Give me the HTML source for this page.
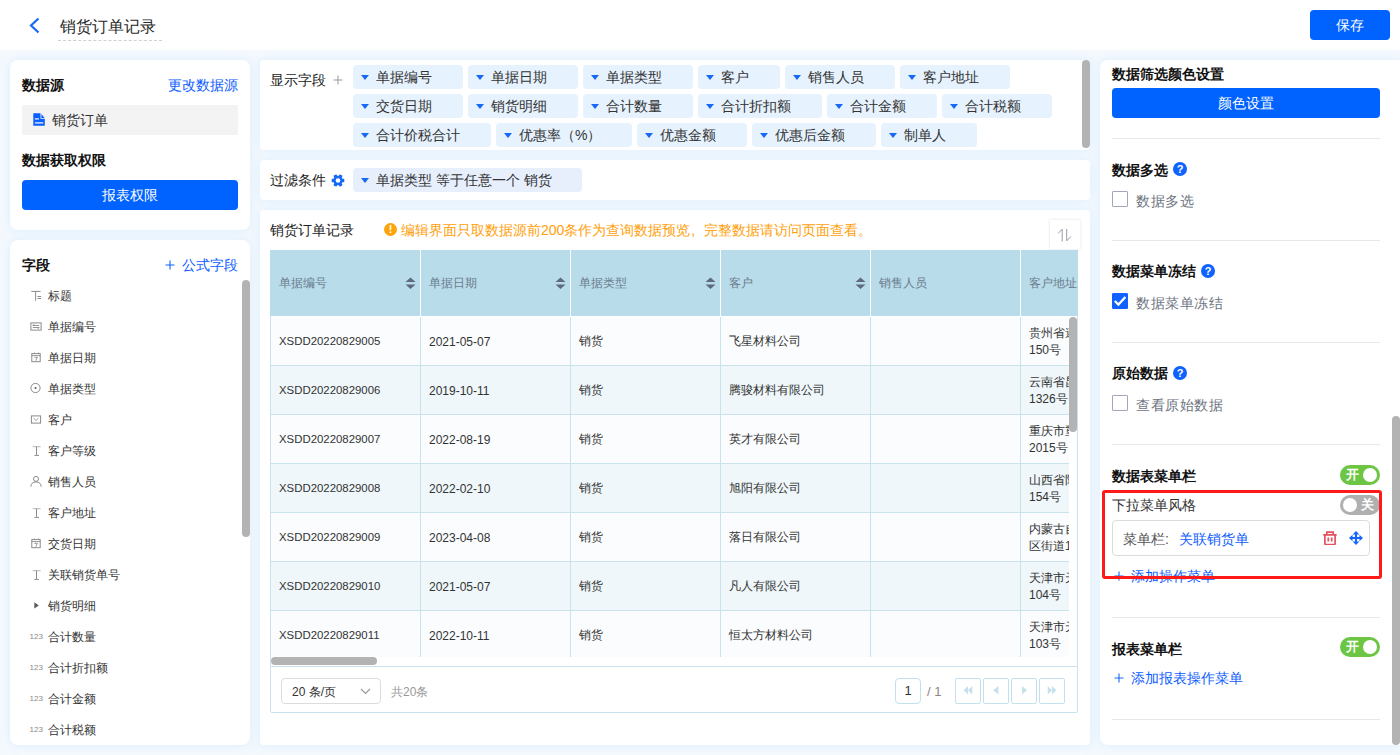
<!DOCTYPE html>
<html><head><meta charset="utf-8">
<style>
*{box-sizing:border-box;margin:0;padding:0}
html,body{width:1400px;height:755px;overflow:hidden}
body{position:relative;background:#f4f9fe;font-family:"Liberation Sans",sans-serif;color:#333;font-size:14px;line-height:1}
.abs{position:absolute}
.card{position:absolute;background:#fff;border-radius:8px;box-shadow:0 0 8px rgba(195,228,253,.5)}
.hdr{position:absolute;left:0;top:0;width:1400px;height:50px;background:#fff}
.btn{position:absolute;background:#0062ff;color:#fff;border-radius:4px;text-align:center;font-size:14px;line-height:30px}
.ttl{position:absolute;font-weight:bold;color:#111;font-size:14px;line-height:14px}
.link{color:#0d5cff}
.t{position:absolute;white-space:nowrap;line-height:14px}
/* fields list */
.fld{position:absolute;left:12px;font-size:12px;line-height:12px;color:#333;white-space:nowrap}
.fld .ic{position:absolute;left:8px;top:0;width:12px;height:12px}
.fld span{position:absolute;left:26px;top:0}
/* chips */
.chips{position:absolute;left:93px;top:5px;width:730px}
.chip{display:inline-block;position:relative;height:24px;margin:0 5px 5px 0;padding:0 31px 0 23px;background:#e6f2fe;border-radius:4px;font-size:14px;line-height:24px;color:#333;vertical-align:top;white-space:nowrap}
.chip:before{content:"";position:absolute;left:8px;top:10px;border-left:4px solid transparent;border-right:4px solid transparent;border-top:5px solid #1769f5}
/* table */
.tbl{position:absolute;left:10px;top:40px;width:808px;height:407px;overflow:hidden}
.th{position:absolute;top:0;height:66px;background:#b8dcea;font-size:12px;color:#6a7a8b;line-height:66px;padding-left:9px;border-right:1px solid #fff}
.row{position:absolute;left:0;width:800px;height:49px;border-bottom:1px solid #c8e3ee}
.cell{position:absolute;top:0;height:49px;font-size:12px;color:#333;line-height:49px;padding-left:9px;border-right:1px solid #c8e3ee;white-space:nowrap;overflow:hidden}
.sep{position:absolute;height:1px;background:#e8e8e8}
.cb{position:absolute;width:16px;height:16px;border:1px solid #a0a7b8;border-radius:1px;background:#fff}
.q{position:absolute;width:14px;height:14px;border-radius:50%;background:#0f62fe;color:#fff;font-size:11px;font-weight:bold;text-align:center;line-height:14px}
.lbl{position:absolute;font-size:14px;letter-spacing:0.5px;color:#6e7481;line-height:14px;white-space:nowrap}
.tog{position:absolute;width:40px;height:20px;border-radius:10px}
.tog .k{position:absolute;top:3px;width:14px;height:14px;border-radius:50%;background:#fff}
.tog .tx{position:absolute;top:3px;font-size:13px;line-height:14px;color:#fff;font-weight:bold}
.pbtn{position:absolute;top:12px;width:26px;height:26px;border:1px solid #c4e0ec;border-radius:3px;background:#fff}
</style></head><body>

<!-- header -->
<div class="hdr">
  <svg class="abs" style="left:28px;top:17px" width="13" height="17" viewBox="0 0 13 17"><path d="M10.5 1.5 L3 8.5 L10.5 15.5" fill="none" stroke="#1769f5" stroke-width="2.2"/></svg>
  <div class="t" style="left:60px;top:18px;font-size:16px;line-height:18px;color:#2a2a2a">销货订单记录</div>
  <div class="abs" style="left:58px;top:40px;width:104px;height:1px;border-top:1px dashed #d0d0d0"></div>
  <div class="btn" style="left:1310px;top:10px;width:80px;height:30px">保存</div>
</div>

<!-- left card 1 -->
<div class="card" style="left:10px;top:60px;width:240px;height:170px">
  <div class="ttl" style="left:12px;top:18px">数据源</div>
  <div class="t link" style="left:158px;top:18px;font-size:14px">更改数据源</div>
  <div class="abs" style="left:12px;top:45px;width:216px;height:30px;background:#f3f3f3;border-radius:2px"></div>
  <svg class="abs" style="left:23px;top:53px" width="12" height="13" viewBox="0 0 12 13"><path d="M0.3 0.2H7.5V5.8H11.8V12.8H0.3Z" fill="#0a5fff"/><path d="M8.4 0.9L11.6 4.9H8.4Z" fill="#0a5fff"/><rect x="1.9" y="5.3" width="4" height="1.2" fill="#fff"/><rect x="1.9" y="9.3" width="8.4" height="1.2" fill="#fff"/></svg>
  <div class="t" style="left:42px;top:53px;font-size:14px;color:#333">销货订单</div>
  <div class="ttl" style="left:12px;top:93px">数据获取权限</div>
  <div class="btn" style="left:12px;top:120px;width:216px;height:30px">报表权限</div>
</div>

<!-- left card 2 -->
<div class="card" style="left:10px;top:240px;width:240px;height:505px;overflow:hidden">
  <div class="ttl" style="left:12px;top:18px">字段</div>
  <svg style="position:absolute;left:155px;top:20px" width="10" height="10" viewBox="0 0 10 10"><path d="M5 0.5V9.5M0.5 5H9.5" stroke="#1060ff" stroke-width="1.1"/></svg><div class="t link" style="left:172px;top:18px;font-size:14px">公式字段</div>
  <div class="abs" style="left:232px;top:40px;width:8px;height:257px;background:#b3b3b3;border-radius:4px"></div>
  <div class="fld" style="top:50px"><svg class="ic" viewBox="0 0 12 12" width="12" height="12"><path d="M1.3 1.4H10.6M5.6 1.4V10.8M7.5 6.5H11.1M7.5 8.5H11.1" stroke="#8a8a8a" stroke-width="1" fill="none"/></svg><span>标题</span></div>
<div class="fld" style="top:81px"><svg class="ic" viewBox="0 0 12 12" width="12" height="12"><rect x="0.9" y="1.9" width="10.2" height="7.2" stroke="#8a8a8a" fill="none"/><path d="M4.3 3L2.8 4.5H9.2M2.8 6.5H9.2L7.7 8" stroke="#8a8a8a" fill="none" stroke-width="0.9"/></svg><span>单据编号</span></div>
<div class="fld" style="top:112px"><svg class="ic" viewBox="0 0 12 12" width="12" height="12"><rect x="1.8" y="1.6" width="8.4" height="8.1" stroke="#8a8a8a" fill="none"/><path d="M1.8 3.6H10.2M4.5 0.5V2M8.5 0.5V2M4.4 5.3H7.4L5.7 8.8" stroke="#8a8a8a" fill="none" stroke-width="0.9"/></svg><span>单据日期</span></div>
<div class="fld" style="top:143px"><svg class="ic" viewBox="0 0 12 12" width="12" height="12"><circle cx="5.5" cy="5" r="4.6" stroke="#8a8a8a" fill="none"/><circle cx="5.5" cy="5" r="1" fill="#555"/></svg><span>单据类型</span></div>
<div class="fld" style="top:174px"><svg class="ic" viewBox="0 0 12 12" width="12" height="12"><rect x="1.4" y="1.9" width="9.2" height="7.2" stroke="#8a8a8a" fill="none"/><path d="M3.5 4.2L5.9 6.5L8.3 4.2" stroke="#8a8a8a" fill="none" stroke-width="0.9"/></svg><span>客户</span></div>
<div class="fld" style="top:205px"><svg class="ic" viewBox="0 0 12 12" width="12" height="12"><path d="M2.8 1.7H10.6" stroke="#b5b5b5"/><path d="M6.5 1.7V9.8M4.4 10.4H9" stroke="#8a8a8a" fill="none"/></svg><span>客户等级</span></div>
<div class="fld" style="top:236px"><svg class="ic" viewBox="0 0 12 12" width="12" height="12"><circle cx="6" cy="2.9" r="2.5" stroke="#8a8a8a" fill="none"/><path d="M0.8 10.7Q1.2 5.9 6 5.9Q10.8 5.9 11.2 10.7" stroke="#8a8a8a" fill="none"/></svg><span>销售人员</span></div>
<div class="fld" style="top:267px"><svg class="ic" viewBox="0 0 12 12" width="12" height="12"><path d="M2.8 1.7H10.6" stroke="#b5b5b5"/><path d="M6.5 1.7V9.8M4.4 10.4H9" stroke="#8a8a8a" fill="none"/></svg><span>客户地址</span></div>
<div class="fld" style="top:298px"><svg class="ic" viewBox="0 0 12 12" width="12" height="12"><rect x="1.8" y="1.6" width="8.4" height="8.1" stroke="#8a8a8a" fill="none"/><path d="M1.8 3.6H10.2M4.5 0.5V2M8.5 0.5V2M4.4 5.3H7.4L5.7 8.8" stroke="#8a8a8a" fill="none" stroke-width="0.9"/></svg><span>交货日期</span></div>
<div class="fld" style="top:329px"><svg class="ic" viewBox="0 0 12 12" width="12" height="12"><path d="M2.8 1.7H10.6" stroke="#b5b5b5"/><path d="M6.5 1.7V9.8M4.4 10.4H9" stroke="#8a8a8a" fill="none"/></svg><span>关联销货单号</span></div>
<div class="fld" style="top:360px"><svg class="ic" viewBox="0 0 12 12" width="12" height="12"><path d="M4.3 2.2L8.8 5.4L4.3 8.6Z" fill="#5a5a5a"/></svg><span>销货明细</span></div>
<div class="fld" style="top:391px"><span class="ic" style="left:7.5px;top:-0.5px;font-size:8px;color:#8a8a8a;width:auto;letter-spacing:0.1px">123</span><span>合计数量</span></div>
<div class="fld" style="top:422px"><span class="ic" style="left:7.5px;top:-0.5px;font-size:8px;color:#8a8a8a;width:auto;letter-spacing:0.1px">123</span><span>合计折扣额</span></div>
<div class="fld" style="top:453px"><span class="ic" style="left:7.5px;top:-0.5px;font-size:8px;color:#8a8a8a;width:auto;letter-spacing:0.1px">123</span><span>合计金额</span></div>
<div class="fld" style="top:484px"><span class="ic" style="left:7.5px;top:-0.5px;font-size:8px;color:#8a8a8a;width:auto;letter-spacing:0.1px">123</span><span>合计税额</span></div>
</div>

<!-- middle: display fields -->
<div class="card" style="left:260px;top:60px;width:830px;height:90px;border-radius:4px">
  <div class="t" style="left:10px;top:13px;font-size:14px;color:#222">显示字段</div><svg style="position:absolute;left:72.5px;top:15px" width="10" height="10" viewBox="0 0 10 10"><path d="M5 0.5V9.5M0.5 5H9.5" stroke="#999" stroke-width="1"/></svg>
  <div class="chips">
    <span class="chip">单据编号</span><span class="chip">单据日期</span><span class="chip">单据类型</span><span class="chip">客户</span><span class="chip">销售人员</span><span class="chip">客户地址</span><br><span class="chip">交货日期</span><span class="chip">销货明细</span><span class="chip">合计数量</span><span class="chip">合计折扣额</span><span class="chip">合计金额</span><span class="chip">合计税额</span><br><span class="chip">合计价税合计</span><span class="chip">优惠率（%）</span><span class="chip">优惠金额</span><span class="chip">优惠后金额</span><span class="chip">制单人</span>
  </div>
  <div class="abs" style="left:822px;top:0;width:8px;height:88px;background:#b3b3b3;border-radius:4px"></div>
</div>

<!-- filter -->
<div class="card" style="left:260px;top:160px;width:830px;height:40px;border-radius:4px">
  <div class="t" style="left:10px;top:13px;font-size:14px;color:#222">过滤条件</div>
  <svg class="abs" style="left:70.5px;top:13.5px" width="14" height="13" viewBox="-7 -6.5 14 13"><g fill="#1769f5"><circle r="4.7"/><rect x="-1.7" y="-6.3" width="3.4" height="12.6" transform="rotate(90)" rx="0.6"/><rect x="-1.7" y="-6.3" width="3.4" height="12.6" transform="rotate(30)" rx="0.6"/><rect x="-1.7" y="-6.3" width="3.4" height="12.6" transform="rotate(-30)" rx="0.6"/></g><circle r="2.3" fill="#fff"/></svg>
  <span class="chip" style="position:absolute;left:93px;top:8px;padding-right:30px;background:#e7effd">单据类型 等于任意一个 销货</span>
</div>

<!-- table card -->
<div class="card" style="left:260px;top:210px;width:830px;height:535px;border-radius:4px">
  <div class="t" style="left:10px;top:13px;font-size:14px;color:#222">销货订单记录</div>
  <div class="abs" style="left:124px;top:13px;width:13px;height:13px;border-radius:50%;background:#fca40a;color:#fff;font-size:11px;font-weight:bold;text-align:center;line-height:13px">!</div>
  <div class="t" style="left:141px;top:13px;font-size:14px;color:#ffa00a">编辑界面只取数据源前200条作为查询数据预览<span style="display:inline-block;width:14px;text-indent:1px">,</span>完整数据请访问页面查看。</div>
  <div class="abs" style="left:790px;top:10px;width:30px;height:29px;background:#fff;box-shadow:0 0 3px rgba(0,0,0,.12);color:#aaa;font-size:14px;text-align:center;line-height:29px"><svg class="abs" style="left:0;top:0" width="30" height="29" viewBox="0 0 30 29"><path d="M12.2 21.5V9.2L8.2 13.3M16.7 9V20.8L20.9 16.4" stroke="#9a9aa8" stroke-width="1" fill="none"/></svg></div>
<!--TBL-->
<div class="abs" style="left:10px;top:40px;width:808px;height:407px;overflow:hidden">
<div class="abs" style="left:0;top:0;width:808px;height:66px;background:#b8dcea"></div>
<div class="abs" style="left:9px;top:27px;font-size:12px;line-height:12px;color:#6b7b8c;white-space:nowrap">单据编号</div>
<svg class="abs" style="left:135px;top:27px" width="11" height="13" viewBox="0 0 11 13"><path d="M0.5 5L5.5 0.5L10.5 5Z M0.5 7.5L5.5 12L10.5 7.5Z" fill="#5d6a80"/></svg>
<div class="abs" style="left:159px;top:27px;font-size:12px;line-height:12px;color:#6b7b8c;white-space:nowrap">单据日期</div>
<svg class="abs" style="left:285px;top:27px" width="11" height="13" viewBox="0 0 11 13"><path d="M0.5 5L5.5 0.5L10.5 5Z M0.5 7.5L5.5 12L10.5 7.5Z" fill="#5d6a80"/></svg>
<div class="abs" style="left:150px;top:0;width:1px;height:66px;background:#fff"></div>
<div class="abs" style="left:309px;top:27px;font-size:12px;line-height:12px;color:#6b7b8c;white-space:nowrap">单据类型</div>
<svg class="abs" style="left:435px;top:27px" width="11" height="13" viewBox="0 0 11 13"><path d="M0.5 5L5.5 0.5L10.5 5Z M0.5 7.5L5.5 12L10.5 7.5Z" fill="#5d6a80"/></svg>
<div class="abs" style="left:300px;top:0;width:1px;height:66px;background:#fff"></div>
<div class="abs" style="left:459px;top:27px;font-size:12px;line-height:12px;color:#6b7b8c;white-space:nowrap">客户</div>
<svg class="abs" style="left:585px;top:27px" width="11" height="13" viewBox="0 0 11 13"><path d="M0.5 5L5.5 0.5L10.5 5Z M0.5 7.5L5.5 12L10.5 7.5Z" fill="#5d6a80"/></svg>
<div class="abs" style="left:450px;top:0;width:1px;height:66px;background:#fff"></div>
<div class="abs" style="left:609px;top:27px;font-size:12px;line-height:12px;color:#6b7b8c;white-space:nowrap">销售人员</div>
<div class="abs" style="left:600px;top:0;width:1px;height:66px;background:#fff"></div>
<div class="abs" style="left:759px;top:27px;font-size:12px;line-height:12px;color:#6b7b8c;white-space:nowrap">客户地址</div>
<div class="abs" style="left:750px;top:0;width:1px;height:66px;background:#fff"></div>
<div class="abs" style="left:1px;top:67px;width:798px;height:49px;background:#fafcfe;border-bottom:1px solid #c8e3ee"></div>
<div class="abs" style="left:9px;top:85px;font-size:11.4px;line-height:13px;color:#333;white-space:nowrap">XSDD20220829005</div>
<div class="abs" style="left:159px;top:86px;font-size:12px;line-height:13px;color:#333;white-space:nowrap">2021-05-07</div>
<div class="abs" style="left:309px;top:85px;font-size:12px;line-height:13px;color:#333;white-space:nowrap">销货</div>
<div class="abs" style="left:459px;top:85px;font-size:12px;line-height:13px;color:#333;white-space:nowrap">飞星材料公司</div>
<div class="abs" style="left:759px;top:74.5px;width:40px;overflow:hidden;font-size:12px;line-height:17px;color:#333;white-space:nowrap">贵州省遵义市<br>150号</div>
<div class="abs" style="left:1px;top:116px;width:798px;height:49px;background:#eff7fa;border-bottom:1px solid #c8e3ee"></div>
<div class="abs" style="left:9px;top:134px;font-size:11.4px;line-height:13px;color:#333;white-space:nowrap">XSDD20220829006</div>
<div class="abs" style="left:159px;top:135px;font-size:12px;line-height:13px;color:#333;white-space:nowrap">2019-10-11</div>
<div class="abs" style="left:309px;top:134px;font-size:12px;line-height:13px;color:#333;white-space:nowrap">销货</div>
<div class="abs" style="left:459px;top:134px;font-size:12px;line-height:13px;color:#333;white-space:nowrap">腾骏材料有限公司</div>
<div class="abs" style="left:759px;top:123.5px;width:40px;overflow:hidden;font-size:12px;line-height:17px;color:#333;white-space:nowrap">云南省昆明市<br>1326号</div>
<div class="abs" style="left:1px;top:165px;width:798px;height:49px;background:#fafcfe;border-bottom:1px solid #c8e3ee"></div>
<div class="abs" style="left:9px;top:183px;font-size:11.4px;line-height:13px;color:#333;white-space:nowrap">XSDD20220829007</div>
<div class="abs" style="left:159px;top:184px;font-size:12px;line-height:13px;color:#333;white-space:nowrap">2022-08-19</div>
<div class="abs" style="left:309px;top:183px;font-size:12px;line-height:13px;color:#333;white-space:nowrap">销货</div>
<div class="abs" style="left:459px;top:183px;font-size:12px;line-height:13px;color:#333;white-space:nowrap">英才有限公司</div>
<div class="abs" style="left:759px;top:172.5px;width:40px;overflow:hidden;font-size:12px;line-height:17px;color:#333;white-space:nowrap">重庆市重庆市<br>2015号</div>
<div class="abs" style="left:1px;top:214px;width:798px;height:49px;background:#eff7fa;border-bottom:1px solid #c8e3ee"></div>
<div class="abs" style="left:9px;top:232px;font-size:11.4px;line-height:13px;color:#333;white-space:nowrap">XSDD20220829008</div>
<div class="abs" style="left:159px;top:233px;font-size:12px;line-height:13px;color:#333;white-space:nowrap">2022-02-10</div>
<div class="abs" style="left:309px;top:232px;font-size:12px;line-height:13px;color:#333;white-space:nowrap">销货</div>
<div class="abs" style="left:459px;top:232px;font-size:12px;line-height:13px;color:#333;white-space:nowrap">旭阳有限公司</div>
<div class="abs" style="left:759px;top:221.5px;width:40px;overflow:hidden;font-size:12px;line-height:17px;color:#333;white-space:nowrap">山西省阳泉市<br>154号</div>
<div class="abs" style="left:1px;top:263px;width:798px;height:49px;background:#fafcfe;border-bottom:1px solid #c8e3ee"></div>
<div class="abs" style="left:9px;top:281px;font-size:11.4px;line-height:13px;color:#333;white-space:nowrap">XSDD20220829009</div>
<div class="abs" style="left:159px;top:282px;font-size:12px;line-height:13px;color:#333;white-space:nowrap">2023-04-08</div>
<div class="abs" style="left:309px;top:281px;font-size:12px;line-height:13px;color:#333;white-space:nowrap">销货</div>
<div class="abs" style="left:459px;top:281px;font-size:12px;line-height:13px;color:#333;white-space:nowrap">落日有限公司</div>
<div class="abs" style="left:759px;top:270.5px;width:40px;overflow:hidden;font-size:12px;line-height:17px;color:#333;white-space:nowrap">内蒙古自治<br>区街道1</div>
<div class="abs" style="left:1px;top:312px;width:798px;height:49px;background:#eff7fa;border-bottom:1px solid #c8e3ee"></div>
<div class="abs" style="left:9px;top:330px;font-size:11.4px;line-height:13px;color:#333;white-space:nowrap">XSDD20220829010</div>
<div class="abs" style="left:159px;top:331px;font-size:12px;line-height:13px;color:#333;white-space:nowrap">2021-05-07</div>
<div class="abs" style="left:309px;top:330px;font-size:12px;line-height:13px;color:#333;white-space:nowrap">销货</div>
<div class="abs" style="left:459px;top:330px;font-size:12px;line-height:13px;color:#333;white-space:nowrap">凡人有限公司</div>
<div class="abs" style="left:759px;top:319.5px;width:40px;overflow:hidden;font-size:12px;line-height:17px;color:#333;white-space:nowrap">天津市天津<br>104号</div>
<div class="abs" style="left:1px;top:361px;width:798px;height:49px;background:#fafcfe;border-bottom:1px solid #c8e3ee"></div>
<div class="abs" style="left:9px;top:379px;font-size:11.4px;line-height:13px;color:#333;white-space:nowrap">XSDD20220829011</div>
<div class="abs" style="left:159px;top:380px;font-size:12px;line-height:13px;color:#333;white-space:nowrap">2022-10-11</div>
<div class="abs" style="left:309px;top:379px;font-size:12px;line-height:13px;color:#333;white-space:nowrap">销货</div>
<div class="abs" style="left:459px;top:379px;font-size:12px;line-height:13px;color:#333;white-space:nowrap">恒太方材料公司</div>
<div class="abs" style="left:759px;top:368.5px;width:40px;overflow:hidden;font-size:12px;line-height:17px;color:#333;white-space:nowrap">天津市天津<br>103号</div>
<div class="abs" style="left:150px;top:67px;width:1px;height:340px;background:#c8e3ee"></div>
<div class="abs" style="left:300px;top:67px;width:1px;height:340px;background:#c8e3ee"></div>
<div class="abs" style="left:450px;top:67px;width:1px;height:340px;background:#c8e3ee"></div>
<div class="abs" style="left:600px;top:67px;width:1px;height:340px;background:#c8e3ee"></div>
<div class="abs" style="left:750px;top:67px;width:1px;height:340px;background:#c8e3ee"></div>
<div class="abs" style="left:0;top:66px;width:1px;height:341px;background:#c8e3ee"></div>
<div class="abs" style="left:807px;top:66px;width:1px;height:341px;background:#c8e3ee"></div>
<div class="abs" style="left:799px;top:67px;width:8px;height:340px;background:#fff"></div>
<div class="abs" style="left:799px;top:67px;width:8px;height:115px;background:#b3b3b3;border-radius:4px"></div>
</div>
<div class="abs" style="left:10px;top:447px;width:808px;height:9px;background:#fff;border-left:1px solid #c8e3ee;border-right:1px solid #c8e3ee"></div>
<div class="abs" style="left:11px;top:447px;width:106px;height:8px;background:#b3b3b3;border-radius:4px"></div>
<div class="abs" style="left:10px;top:456px;width:808px;height:47px;border:1px solid #c8e3ee;border-radius:0 0 2px 2px">
<div class="abs" style="left:10px;top:11px;width:100px;height:26px;border:1px solid #dcdcdc;border-radius:4px"></div>
<div class="abs" style="left:21px;top:19px;font-size:12px;line-height:13px;color:#333;white-space:nowrap">20 条/页</div>
<svg class="abs" style="left:89px;top:21px" width="11" height="7" viewBox="0 0 11 7"><path d="M1 1L5.5 5.5L10 1" stroke="#999" fill="none" stroke-width="1.2"/></svg>
<div class="abs" style="left:120px;top:19px;font-size:12px;line-height:13px;color:#999;white-space:nowrap">共20条</div>
<div class="abs" style="left:624px;top:11px;width:26px;height:26px;border:1px solid #c4e0ec;border-radius:4px;font-size:13px;line-height:24px;text-align:center;color:#333">1</div>
<div class="abs" style="left:656px;top:18px;font-size:13px;line-height:13px;color:#888;white-space:nowrap">/ 1</div>
<div class="abs" style="left:684px;top:11px;width:26px;height:26px;border:1px solid #c4e0ec;border-radius:2px"><svg class="abs" style="left:0;top:0" width="24" height="24" viewBox="0 0 24 24"><path d="M7.7 11.2L12 7V15.4Z M12 11.2L16.3 7V15.4Z" fill="#c5e1ec"/></svg></div>
<div class="abs" style="left:712px;top:11px;width:26px;height:26px;border:1px solid #c4e0ec;border-radius:2px"><svg class="abs" style="left:0;top:0" width="24" height="24" viewBox="0 0 24 24"><path d="M9.3 11.2L14.4 7V15.6Z" fill="#c5e1ec"/></svg></div>
<div class="abs" style="left:740px;top:11px;width:26px;height:26px;border:1px solid #c4e0ec;border-radius:2px"><svg class="abs" style="left:0;top:0" width="24" height="24" viewBox="0 0 24 24"><path d="M15 11.2L10 7V15.6Z" fill="#c5e1ec"/></svg></div>
<div class="abs" style="left:768px;top:11px;width:26px;height:26px;border:1px solid #c4e0ec;border-radius:2px"><svg class="abs" style="left:0;top:0" width="24" height="24" viewBox="0 0 24 24"><path d="M16.3 11.2L12 7V15.4Z M12 11.2L7.7 7V15.4Z" fill="#c5e1ec"/></svg></div>
</div>
<!--/TBL-->
</div>

<!-- right card -->
<div class="card" style="left:1100px;top:60px;width:300px;height:685px;border-radius:8px 0 0 8px">
  <div class="ttl" style="left:12px;top:7px">数据筛选颜色设置</div>
<div class="btn" style="left:12px;top:28px;width:268px;height:30px">颜色设置</div>
<div class="sep" style="left:12px;top:78px;width:268px"></div>
<div class="ttl" style="left:12px;top:103px">数据多选</div>
<div class="q" style="left:73px;top:102px">?</div>
<div class="cb" style="left:12px;top:131px"></div>
<div class="lbl" style="left:36px;top:133.5px">数据多选</div>
<div class="sep" style="left:12px;top:180px;width:268px"></div>
<div class="ttl" style="left:12px;top:204px">数据菜单冻结</div>
<div class="q" style="left:101px;top:204px">?</div>
<div class="cb" style="left:12px;top:233px;background:#0f62fe;border-color:#0f62fe"><svg class="abs" style="left:-1px;top:-1px" width="16" height="16" viewBox="0 0 16 16"><path d="M2.8 8L6.4 11.6L13.4 4" stroke="#fff" stroke-width="2.2" fill="none"/></svg></div>
<div class="lbl" style="left:36px;top:235.5px">数据菜单冻结</div>
<div class="sep" style="left:12px;top:282px;width:268px"></div>
<div class="ttl" style="left:12px;top:306px">原始数据</div>
<div class="q" style="left:73px;top:306px">?</div>
<div class="cb" style="left:12px;top:335px"></div>
<div class="lbl" style="left:36px;top:337.5px">查看原始数据</div>
<div class="sep" style="left:12px;top:384px;width:268px"></div>
<div class="ttl" style="left:12px;top:409px">数据表菜单栏</div>
<div class="tog" style="left:240px;top:405px;background:#6cc644"><div class="tx" style="left:6px">开</div><div class="k" style="left:23px"></div></div>
<div class="t" style="left:12px;top:438px;font-size:14px;color:#333">下拉菜单风格</div>
<div class="tog" style="left:240px;top:435px;background:#b0b0b0"><div class="k" style="left:2.5px"></div><div class="tx" style="left:21px">关</div></div>
<div class="abs" style="left:12px;top:460px;width:258px;height:36px;border:1px solid #dcdcdc;border-radius:4px"></div>
<div class="t" style="left:23px;top:472px;font-size:14px;color:#555">菜单栏<span style="display:inline-block;width:14px">:</span><span class="link">关联销货单</span></div>
<svg class="abs" style="left:223px;top:471px" width="14" height="14" viewBox="0 0 14 14"><path d="M3.8 3.6V1.2H10.2V3.6M0.3 3.9H13.7M1.9 4.2V12.4Q1.9 13.6 3.1 13.6H10.9Q12.1 13.6 12.1 12.4V4.2M5.3 6.4V10.4M8.7 6.4V10.4" stroke="#e5505e" stroke-width="1.7" fill="none"/></svg>
<svg class="abs" style="left:248.5px;top:471px" width="14" height="14" viewBox="0 0 13.5 13.5"><path d="M6.75 2V11.5M2 6.75H11.5" stroke="#1466ff" stroke-width="2"/><path d="M6.75 0L10 3.4H3.5Z M6.75 13.5L10 10.1H3.5Z M0 6.75L3.4 3.5V10Z M13.5 6.75L10.1 3.5V10Z" fill="#1466ff"/></svg>
<svg style="position:absolute;left:14px;top:511px" width="10" height="10" viewBox="0 0 10 10"><path d="M5 0.5V9.5M0.5 5H9.5" stroke="#1769f5" stroke-width="1.1"/></svg><div class="t link" style="left:31px;top:509px;font-size:14px">添加操作菜单</div>
<div class="abs" style="left:2px;top:430px;width:280px;height:89px;border:3px solid #ff1a1a;border-radius:3px"></div>
<div class="sep" style="left:12px;top:557px;width:268px"></div>
<div class="ttl" style="left:12px;top:582px">报表菜单栏</div>
<div class="tog" style="left:240px;top:577px;background:#6cc644"><div class="tx" style="left:6px">开</div><div class="k" style="left:23px"></div></div>
<svg style="position:absolute;left:14px;top:613px" width="10" height="10" viewBox="0 0 10 10"><path d="M5 0.5V9.5M0.5 5H9.5" stroke="#1769f5" stroke-width="1.1"/></svg><div class="t link" style="left:31px;top:611px;font-size:14px">添加报表操作菜单</div>
<div class="sep" style="left:12px;top:659px;width:268px"></div>
<div class="abs" style="left:292px;top:356px;width:8px;height:329px;background:#b3b3b3;border-radius:4px"></div>
</div>

</body></html>
